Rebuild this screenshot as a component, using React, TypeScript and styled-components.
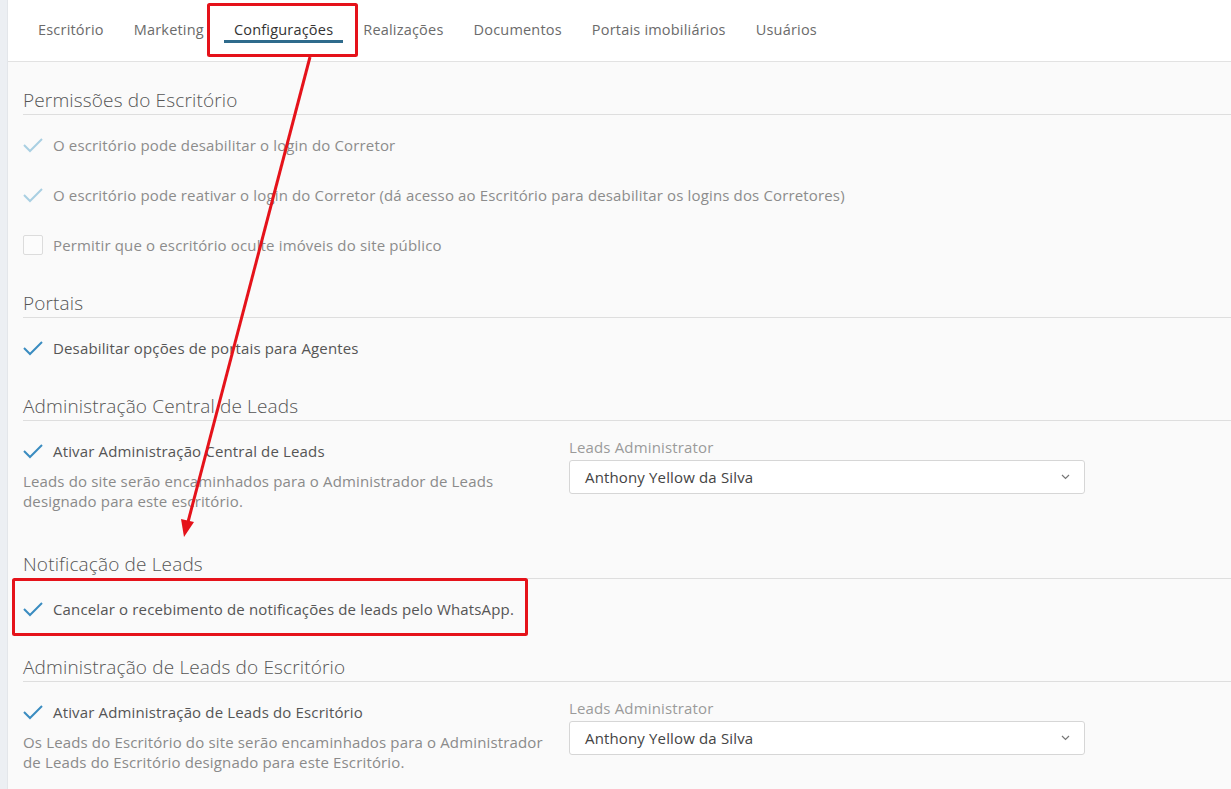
import styled, { createGlobalStyle } from "styled-components";

const GlobalStyle = createGlobalStyle`
  html, body {
    margin: 0;
    padding: 0;
    background: #eef0f3;
    font-family: "Open Sans", "Liberation Sans", sans-serif;
    letter-spacing: 0.15px;
  }
  * { box-sizing: border-box; }
`;

const Page = styled.div`
  position: relative;
  display: flex;
  min-height: 789px;
  width: 1231px;
  overflow: hidden;
`;

const Gutter = styled.div`
  width: 8px;
  flex: none;
  background: #eceff3;
  border-right: 1px solid #e3e6ea;
`;

const Main = styled.div`
  flex: 1;
  background: #fafafa;
  display: flex;
  flex-direction: column;
`;

const TabBar = styled.nav`
  height: 62px;
  background: #fff;
  border-bottom: 1px solid #e2e2e2;
  display: flex;
  align-items: flex-start;
  padding-left: 20px;
  gap: 10px;
`;

const Tab = styled.div<{ $active?: boolean }>`
  padding: 20px 10px 0;
  height: 43px;
  line-height: 20px;
  font-size: 14.5px;
  letter-spacing: 0.2px;
  color: ${({ $active }) => ($active ? "#333" : "#6b6b6b")};
  border-bottom: 3px solid ${({ $active }) => ($active ? "#2f6b8c" : "transparent")};
  white-space: nowrap;
`;

const Content = styled.div`
  padding: 0 0 40px 15px;
`;

const Section = styled.section<{ $first?: boolean }>`
  margin-top: ${({ $first }) => ($first ? "26px" : "36px")};
`;

const SectionTitle = styled.h3`
  margin: 0;
  font-size: 19px;
  font-weight: 300;
  line-height: 24px;
  padding-bottom: 2px;
  color: #555;
  border-bottom: 1px solid #dedede;
`;

const SectionBody = styled.div`
  padding-top: 20px;
  display: flex;
  flex-direction: column;
  gap: 30px;
`;

const TwoCols = styled.div`
  padding: 20px 0 5px;
  display: grid;
  grid-template-columns: 530px 516px;
  column-gap: 16px;
`;

const Row = styled.label<{ $muted?: boolean }>`
  display: flex;
  align-items: center;
  gap: 10px;
  height: 20px;
  font-size: 15px;
  color: ${({ $muted }) => ($muted ? "#8c8c8c" : "#555")};
  white-space: nowrap;
`;

const Box = styled.span`
  width: 20px;
  height: 20px;
  border: 1px solid #dcdcdc;
  border-radius: 2px;
  background: #fcfcfc;
  flex: none;
`;

const Description = styled.p`
  margin: 10px 0 0;
  font-size: 15px;
  line-height: 20px;
  color: #8a8a8a;
  white-space: nowrap;
`;

const FieldLabel = styled.div`
  font-size: 15px;
  line-height: 18px;
  margin-top: -3px;
  color: #9a9a9a;
`;

const SelectBox = styled.div`
  margin-top: 4px;
  height: 34px;
  border: 1px solid #d6d6d6;
  border-radius: 3px;
  background: #fff;
  display: flex;
  align-items: center;
  justify-content: space-between;
  padding: 0 14px 0 15px;
  font-size: 15px;
  color: #444;
`;

const Overlay = styled.svg`
  position: absolute;
  left: 0;
  top: 0;
  pointer-events: none;
`;

const Check = ({ muted }: { muted?: boolean }) => (
  <svg width="20" height="16" viewBox="0 0 20 16" style={{ flex: "none" }}>
    <path
      d="M1 8 L7 14 L19 2"
      fill="none"
      stroke={muted ? "#a9cfe2" : "#3a8cc0"}
      strokeWidth="2"
    />
  </svg>
);

const Chevron = () => (
  <svg width="9" height="6" viewBox="0 0 9 6">
    <path d="M1 1 L4.5 4.5 L8 1" fill="none" stroke="#777" strokeWidth="1.2" />
  </svg>
);

const tabs = [
  "Escritório",
  "Marketing",
  "Configurações",
  "Realizações",
  "Documentos",
  "Portais imobiliários",
  "Usuários",
];

const AdminField = () => (
  <div>
    <FieldLabel>Leads Administrator</FieldLabel>
    <SelectBox>
      <span>Anthony Yellow da Silva</span>
      <Chevron />
    </SelectBox>
  </div>
);

export default function App() {
  return (
    <Page>
      <GlobalStyle />
      <Gutter />
      <Main>
        <TabBar>
          {tabs.map((t) => (
            <Tab key={t} $active={t === "Configurações"}>
              {t}
            </Tab>
          ))}
        </TabBar>
        <Content>
          <Section $first>
            <SectionTitle>Permissões do Escritório</SectionTitle>
            <SectionBody>
              <Row $muted>
                <Check muted />O escritório pode desabilitar o login do Corretor
              </Row>
              <Row $muted>
                <Check muted />O escritório pode reativar o login do Corretor (dá acesso ao
                Escritório para desabilitar os logins dos Corretores)
              </Row>
              <Row $muted>
                <Box />
                Permitir que o escritório oculte imóveis do site público
              </Row>
            </SectionBody>
          </Section>

          <Section>
            <SectionTitle>Portais</SectionTitle>
            <SectionBody>
              <Row>
                <Check />
                Desabilitar opções de portais para Agentes
              </Row>
            </SectionBody>
          </Section>

          <Section>
            <SectionTitle>Administração Central de Leads</SectionTitle>
            <TwoCols>
              <div>
                <Row>
                  <Check />
                  Ativar Administração Central de Leads
                </Row>
                <Description>
                  Leads do site serão encaminhados para o Administrador de Leads
                  <br />
                  designado para este escritório.
                </Description>
              </div>
              <AdminField />
            </TwoCols>
          </Section>

          <Section>
            <SectionTitle>Notificação de Leads</SectionTitle>
            <SectionBody>
              <Row>
                <Check />
                Cancelar o recebimento de notificações de leads pelo WhatsApp.
              </Row>
            </SectionBody>
          </Section>

          <Section>
            <SectionTitle>Administração de Leads do Escritório</SectionTitle>
            <TwoCols>
              <div>
                <Row>
                  <Check />
                  Ativar Administração de Leads do Escritório
                </Row>
                <Description>
                  Os Leads do Escritório do site serão encaminhados para o Administrador
                  <br />
                  de Leads do Escritório designado para este Escritório.
                </Description>
              </div>
              <AdminField />
            </TwoCols>
          </Section>
        </Content>
      </Main>

      <Overlay width="1231" height="789" viewBox="0 0 1231 789">
        <rect x="208.5" y="4.5" width="148" height="51" fill="none" stroke="#e5121a" strokeWidth="3" rx="1" />
        <line x1="310" y1="57" x2="188" y2="522" stroke="#e5121a" strokeWidth="3" />
        <polygon points="184,537 181,519 194,522" fill="#e5121a" />
        <rect x="13.5" y="579.5" width="513" height="55" fill="none" stroke="#e5121a" strokeWidth="3" rx="1" />
      </Overlay>
    </Page>
  );
}
